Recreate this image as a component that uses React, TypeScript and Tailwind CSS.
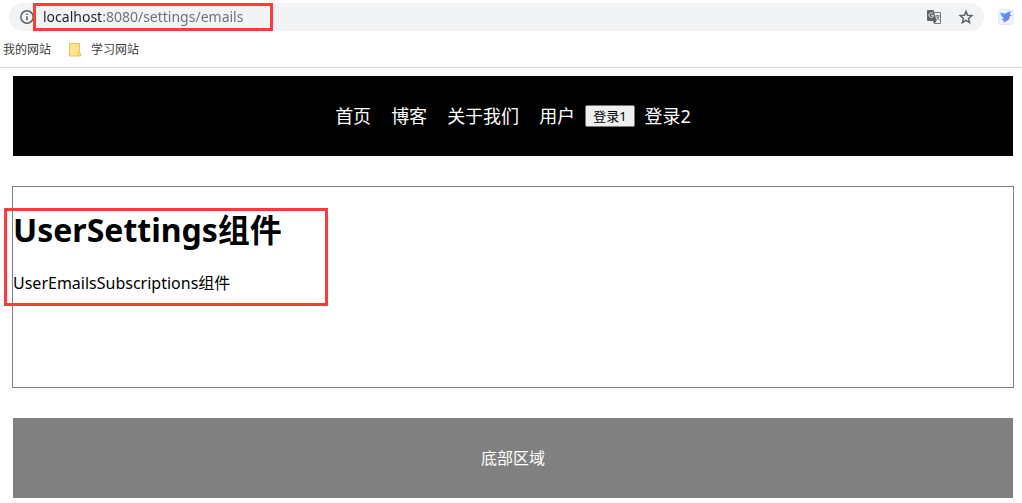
import React from 'react';

const navLinks = ['首页', '博客', '关于我们', '用户'];

const InfoIcon = () => (
	<svg className="w-4 h-4 shrink-0" viewBox="0 0 16 16" fill="none" aria-hidden="true">
		<circle cx="8" cy="8" r="6.2" stroke="#5f6368" strokeWidth="1.5" />
		<path d="M8 7.2v4" stroke="#5f6368" strokeWidth="1.6" />
		<path d="M8 4.4V6" stroke="#5f6368" strokeWidth="1.6" />
	</svg>
);

const TranslateIcon = () => (
	<svg className="w-4 h-4" viewBox="0 0 16 16" fill="none" aria-hidden="true">
		<path d="M6 3.5h8.5v11H8.5" stroke="#75797d" strokeWidth="1" />
		<path d="M2 1h5.5l3.2 11H2a1 1 0 0 1-1-1V2a1 1 0 0 1 1-1z" fill="#5f6368" />
		<path d="M8 15l-1-3h3.7z" fill="#5f6368" />
		<path d="M7.2 4.9A2.3 2.3 0 1 0 7.6 6.6H5.4" stroke="#f1f3f4" strokeWidth="1" />
		<path d="M9.5 6.8h4.2M11.4 5.8v1M13 7c-.4 1.7-1.5 3-2.6 3.9M10.6 7.8c.6 1.5 1.6 2.6 2.8 3.4" stroke="#5f6368" strokeWidth=".9" />
	</svg>
);

const StarIcon = () => (
	<svg className="w-4 h-4" viewBox="0 0 16 16" fill="none" aria-hidden="true">
		<path d="M8 2.400l1.600 3.900 4.200.3-3.200 2.800 1 4.200L8 11.400l-3.600 2.200 1-4.200-3.200-2.800 4.200-.3z" stroke="#5f6368" strokeWidth="1.5" />
	</svg>
);

const BirdIcon = () => (
	<svg className="w-4 h-4" viewBox="0 0 16 16" aria-hidden="true">
		<defs>
			<linearGradient id="bird" x1="0" y1="0" x2=".8" y2="1">
				<stop offset="0" stopColor="#55b8fb" />
				<stop offset=".5" stopColor="#5b8afa" />
				<stop offset="1" stopColor="#a877f5" />
			</linearGradient>
		</defs>
		<rect x=".5" y=".5" width="15" height="15" rx="2" fill="#f0f4ff" stroke="#e2e8fa" />
		<path d="M2 3.4l5.400 1.400C9 3.500 11 2.400 14 2c-1.400 1-2 2.200-2.100 3.400l2.300.8-2.300 1c-.1 2.800-1.400 4.300-3.700 5-.9.5-1.700 1.100-2.900 1.800.2-1 .5-1.500 1-2.200C4.800 11.400 3.900 10.600 3.400 9.500c1 .3 1.900.2 2.700-.1C4 8 2.600 6 2 3.400z" fill="url(#bird)" />
	</svg>
);

const FolderIcon = () => (
	<svg className="w-3 h-4" viewBox="0 0 12 16" aria-hidden="true">
		<path d="M.5 1.5h10v9.5h1v3H.5z" fill="#ffe391" stroke="#edc64d" />
		<path d="M9.5 14v-3h1" fill="none" stroke="#edc64d" />
	</svg>
);

const BrowserBar = () => (
	<div className="border-b border-[#dadce0] h-[68px] pt-[3px]">
		<div className="flex items-center">
			<div className="ml-[9px] flex-1 flex items-center h-7 rounded-full bg-[#f1f3f4] px-[10px]">
				<InfoIcon />
				{/* Address, host part darker than the path */}
				<div className="relative flex items-center ml-2 h-7">
					<input
						type="text"
						aria-label="地址栏"
						defaultValue="localhost:8080/settings/emails"
						className="w-[220px] text-sm leading-5 outline-none text-transparent bg-clip-text bg-[linear-gradient(90deg,#202124_59px,#6b6f73_59px)]"
					/>
					<div className="absolute -left-[10px] top-0 w-60 h-7 border-3 border-[#fd3b3b] pointer-events-none" />
				</div>
				<div className="ml-auto flex items-center gap-4">
					<button type="button" aria-label="翻译此页"><TranslateIcon /></button>
					<button type="button" aria-label="收藏"><StarIcon /></button>
				</div>
			</div>
			<button type="button" aria-label="扩展程序" className="ml-[14px] mr-2"><BirdIcon /></button>
		</div>
		<div className="flex items-center h-9 pt-px pl-[3px] gap-[18px] text-xs text-[#3c4043]">
			<a href="#">我的网站</a>
			<a href="#" className="flex items-center gap-[10px]">
				<FolderIcon />
				学习网站
			</a>
		</div>
	</div>
);

const App: React.FC = () => {
	return (
		<div className="bg-white text-black font-['Noto_Sans','Noto_Sans_CJK_SC',sans-serif]">
			<BrowserBar />

			<div className="mt-2 ml-[13px] mr-[9px]">
				{/* Navigation */}
				<header className="h-20 bg-black text-white flex items-center justify-center text-lg">
					{navLinks.map((label) => (
						<a key={label} href="#" className="mx-[10px]">{label}</a>
					))}
					<button type="button" className="h-[22px] px-[7px] rounded-xs border border-[#767676] bg-[#efefef] text-black text-[13px] leading-5">
						登录1
					</button>
					<a href="#" className="mx-[10px]">登录2</a>
				</header>

				{/* Routed view */}
				<main className="-mx-px my-[30px] h-[202px] border border-[#808080]">
					<div className="relative pt-[22px]">
						<h1 className="text-[32px] leading-[42px] font-bold">UserSettings组件</h1>
						<p className="mt-5 text-base leading-6">UserEmailsSubscriptions组件</p>
						<div className="absolute -left-[9px] top-[21px] w-[324px] h-[98px] border-3 border-[#fd3b3b] pointer-events-none" />
					</div>
				</main>

				<footer className="h-20 bg-[#808080] text-white flex items-center justify-center text-base">
					底部区域
				</footer>
			</div>
		</div>
	);
};

export default App;
